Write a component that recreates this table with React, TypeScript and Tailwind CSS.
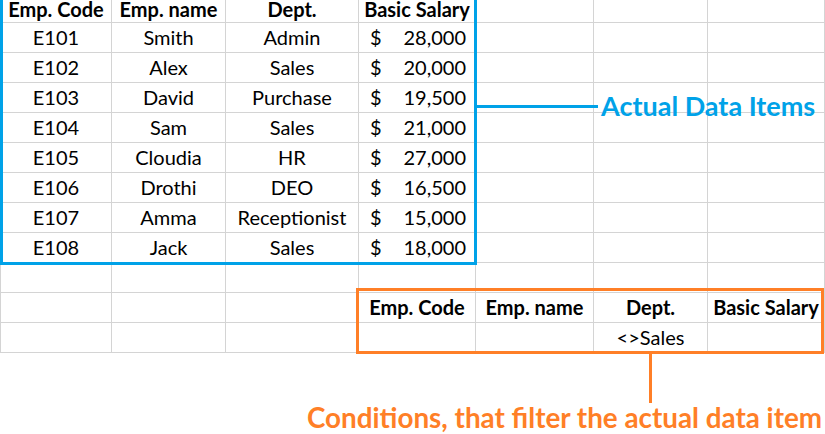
import React from 'react'

const cols = 'grid-cols-[111px_114px_133px_117px_118px_114px_117px]'

type Cell = { text?: string; bold?: boolean; money?: string }

const data = [
  ['E101', 'Smith', 'Admin', '28,000'],
  ['E102', 'Alex', 'Sales', '20,000'],
  ['E103', 'David', 'Purchase', '19,500'],
  ['E104', 'Sam', 'Sales', '21,000'],
  ['E105', 'Cloudia', 'HR', '27,000'],
  ['E106', 'Drothi', 'DEO', '16,500'],
  ['E107', 'Amma', 'Receptionist', '15,000'],
  ['E108', 'Jack', 'Sales', '18,000'],
]

const heads = ['Emp. Code', 'Emp. name', 'Dept.', 'Basic Salary']

const rows: Cell[][] = [
  ...data.map((d) => [{ text: d[0] }, { text: d[1] }, { text: d[2] }, { money: d[3] }, {}, {}, {}]),
  [{}, {}, {}, {}, {}, {}, {}],
  [{}, {}, {}, ...heads.map((h) => ({ text: h, bold: true }))],
  [{}, {}, {}, {}, {}, { text: '<>Sales' }, {}],
]

const SheetCell = ({ cell, top }: { cell: Cell; top?: boolean }) => {
  const h = top ? 'h-[23px] pb-[3px] leading-[19px]' : 'h-[30px] pb-[2px]'
  if (cell.money) {
    return (
      <div className={`${h} border-r border-b border-[#d4d4d4] flex items-center justify-between pl-[11px] pr-[9px]`}>
        <span>$</span>
        <span>{cell.money}</span>
      </div>
    )
  }
  return (
    <div className={`${h} border-r border-b border-[#d4d4d4] flex items-center justify-center whitespace-nowrap ${cell.bold ? 'font-bold' : ''}`}>
      {cell.text}
    </div>
  )
}

export default function App() {
  return (
    <div className="relative w-[825px] h-[434px] overflow-hidden bg-white text-black font-['Lato',sans-serif] text-[20px] leading-[22px]">
      <div className={`grid ${cols} border-l border-[#d4d4d4]`}>
        {heads.map((h) => <SheetCell key={h} top cell={{ text: h, bold: true }} />)}
        <SheetCell top cell={{}} />
        <SheetCell top cell={{}} />
        <SheetCell top cell={{}} />
        {rows.map((r, i) => r.map((c, j) => <SheetCell key={i + '-' + j} cell={c} />))}
      </div>

      {/* blue annotation: box round the data, leader line and label */}
      <div className="absolute left-0 top-[-10px] w-[477px] h-[275px] border-[3px] border-[#00A2E8]" />
      <div className="absolute left-[477px] top-[91px] flex items-center gap-[3px] text-[27px] leading-[30px] font-bold text-[#00A2E8] whitespace-nowrap">
        <div className="w-[121px] h-[3px] bg-[#00A2E8] mt-[1px]" />
        <span>Actual Data Items</span>
      </div>

      {/* orange annotation: box round the criteria, leader line and label */}
      <div className="absolute left-[356px] top-[288px] w-[468px] h-[66px] border-[3px] border-[#FF7F27]" />
      <div className="absolute left-[307px] top-[354px] flex flex-col text-[27.8px] leading-[30px] font-bold text-[#FF7F27] whitespace-nowrap">
        <div className="ml-[342px] w-[3px] h-[49px] bg-[#FF7F27]" />
        <span>Conditions, that filter the actual data item</span>
      </div>
    </div>
  )
}
